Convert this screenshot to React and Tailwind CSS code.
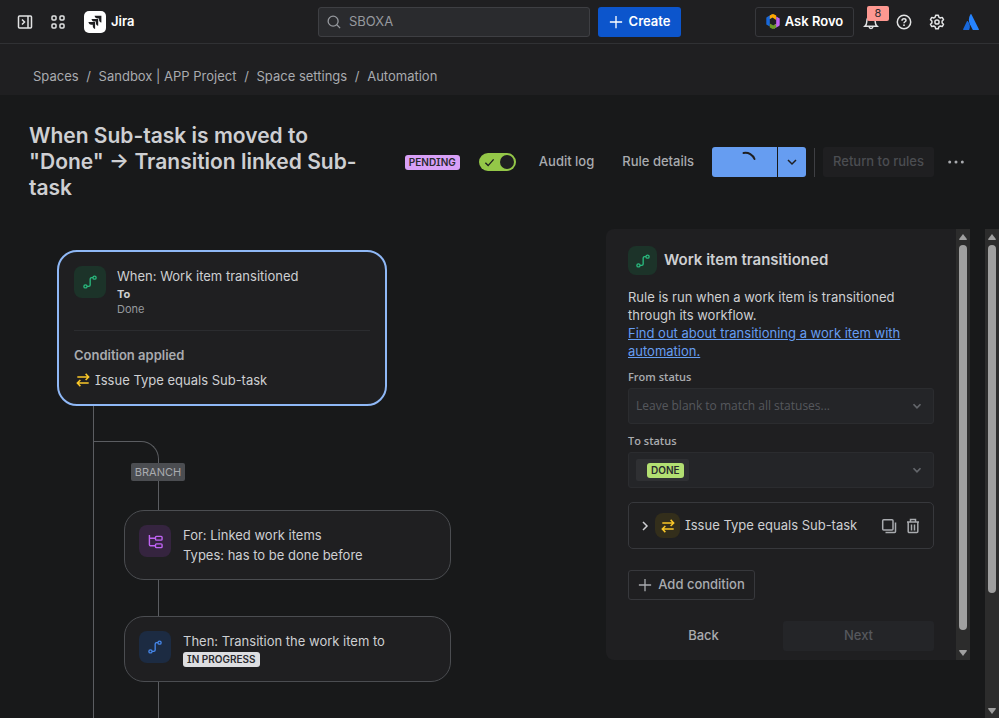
import React from 'react';
import clsx from 'clsx';

const CRUMBS = ['Spaces', 'Sandbox | APP Project', 'Space settings', 'Automation'];

// ── ICONS ──
function Icon({ size = 16, stroke = 1.5, className, children }) {
  return (
    <svg
      width={size}
      height={size}
      viewBox="0 0 16 16"
      fill="none"
      stroke="currentColor"
      strokeWidth={stroke}
      className={clsx('shrink-0', className)}
      aria-hidden="true"
    >
      {children}
    </svg>
  );
}

function TransitionIcon({ className }) {
  return (
    <Icon size={14} className={className}>
      <circle cx="2.8" cy="13" r="1.8" />
      <circle cx="13.2" cy="3" r="1.8" />
      <path d="M4.6 13H6.5C7.6 13 8.2 12.4 8.2 11.3V4.7C8.2 3.6 8.8 3 9.9 3H11.4" />
    </Icon>
  );
}

function BranchIcon() {
  return (
    <Icon size={15}>
      <path d="M1.5 1v10.5a1 1 0 0 0 1 1H8M1.5 4.5H8" />
      <rect x="8" y="2.5" width="7" height="4" rx="1" />
      <rect x="8" y="10.5" width="7" height="4" rx="1" />
    </Icon>
  );
}

function SwapIcon() {
  return (
    <Icon size={14} stroke={1.7}>
      <path d="M1.5 4.500h12.500M11 1l3.500 3.500L11 8M14.500 11.500H2M5 8l-3.500 3.500L5 15" />
    </Icon>
  );
}

function PlusIcon() {
  return (
    <Icon size={14}>
      <path d="M8 1v14M1 8h14" />
    </Icon>
  );
}

function ChevronDown({ size = 16, stroke, className }) {
  return (
    <Icon size={size} stroke={stroke} className={className}>
      <path d="M4 6l4 4 4-4" />
    </Icon>
  );
}

function IconTile({ size, tone, children }) {
  return (
    <div
      className={clsx(
        'flex shrink-0 items-center justify-center rounded-lg',
        size === 'lg' && 'h-8 w-8',
        size === 'md' && 'h-[29px] w-[29px]',
        size === 'sm' && 'h-[25px] w-[25px]',
        tone === 'green' && 'bg-[#1c3329] text-[#2abb7f]',
        tone === 'purple' && 'bg-[#35243f] text-[#bf63f3]',
        tone === 'blue' && 'bg-[#1c2b42] text-[#4688ec]',
        tone === 'yellow' && 'bg-[#332e1b] text-[#fbc828]'
      )}
    >
      {children}
    </div>
  );
}

function Lozenge({ tone, children }) {
  return (
    <span
      className={clsx(
        'inline-flex h-[15px] items-center rounded-[3px] px-1 text-[10px] font-semibold leading-none text-[#292a2e]',
        tone === 'purple' && 'bg-[#d8a0f7]',
        tone === 'green' && 'bg-[#b3df72]',
        tone === 'gray' && 'bg-[#dddee1]'
      )}
    >
      {children}
    </span>
  );
}

function ScrollBar({ thumb }) {
  return (
    <div className="flex w-[14px] shrink-0 flex-col items-center bg-[#2c2c2c] pt-[5px] pb-1" aria-hidden="true">
      <svg width="8" height="6" viewBox="0 0 8 6" className="shrink-0" fill="#9f9f9f">
        <path d="M4 0L8 5.2Q8 6 7 6H1Q0 6 0 5.2z" />
      </svg>
      <div className="mt-[5px] flex w-2 flex-1 flex-col">
        <div className={clsx('w-full rounded-full bg-[#9f9f9f]', thumb)} />
      </div>
      <svg width="8" height="6" viewBox="0 0 8 6" className="shrink-0" fill="#9f9f9f">
        <path d="M4 6L0 .8Q0 0 1 0h6q1 0 1 .8z" />
      </svg>
    </div>
  );
}

// ── TOP BAR ──
function TopBar() {
  return (
    <header className="flex h-11 shrink-0 items-center border-b border-[#303134] bg-[#1f1f21] text-[#e2e3e4]">
      <div className="flex flex-1 items-center">
        <button type="button" aria-label="Expand sidebar" className="ml-[17px]">
          <Icon>
            <rect x="1.5" y="2" width="13" height="12" rx="1" />
            <path d="M11 2v12M5 5.5L7.5 8 5 10.5" />
          </Icon>
        </button>
        <button type="button" aria-label="Switch apps" className="ml-[17px]">
          <Icon>
            <rect x="2" y="2" width="4" height="4" rx="1" />
            <rect x="10" y="2" width="4" height="4" rx="1" />
            <rect x="2" y="10" width="4" height="4" rx="1" />
            <rect x="10" y="10" width="4" height="4" rx="1" />
          </Icon>
        </button>
        <a href="#home" className="ml-[18px] flex items-center gap-[5px] text-[13px] font-semibold text-white">
          <svg width="22" height="22" viewBox="0 0 22 22" aria-hidden="true">
            <rect width="22" height="22" rx="5" fill="#fff" />
            <g fill="#1f1f21">
              <path d="M10.6 4.8H17.4V11.6C15.7 11.2 15.1 10.2 15.1 8.7V7.5H13.8C11.9 7.5 10.9 6.6 10.6 4.8z" />
              <path d="M7.5 8H14.2V14.8C12.5 14.4 11.9 13.3 11.9 11.9V10.6H10.6C8.8 10.6 7.8 9.7 7.5 8z" />
              <path d="M4.4 11.1H11.1V17.9C9.4 17.5 8.8 16.5 8.8 15V13.7H7.5C5.6 13.7 4.7 12.8 4.4 11.1z" />
            </g>
          </svg>
          Jira
        </a>
      </div>

      <div className="flex w-[363px] shrink-0 gap-2">
        <label className="flex h-[30px] flex-1 items-center gap-2 rounded-[3px] border border-[#3e3f43] bg-[#2a2b2e] px-2 text-[#96999e]">
          <Icon size={14}>
            <circle cx="7" cy="7" r="5.7" />
            <path d="M11.2 11.2L15 15" />
          </Icon>
          <input
            type="search"
            aria-label="Search"
            placeholder="SBOXA"
            className="w-full bg-transparent text-[13px] outline-none placeholder:text-[#96999e]"
          />
        </label>
        <button
          type="button"
          className="flex h-[30px] w-[83px] items-center justify-center gap-[6px] rounded-[3px] bg-[#0c55cc] text-[13px] font-semibold text-white"
        >
          <PlusIcon />
          Create
        </button>
      </div>

      <div className="flex flex-1 items-center justify-end">
        <button
          type="button"
          className="flex h-[30px] w-[99px] items-center justify-center gap-[5px] rounded-[3px] border border-[#37383c] text-[13px] font-semibold text-white"
        >
          <svg width="14" height="15" viewBox="0 0 14 15" aria-hidden="true">
            <path d="M6 .3L1 3Q.3 3.500 .3 4.300V10.600L3.800 12.500V5.200L6.300 3.700z" fill="#1868db" />
            <path d="M3.800 1.500L6.200 .2Q7 0 7.800 .3L10.200 1.600V6L6.500 3.600 3.800 5z" fill="#fca700" />
            <path d="M8 14.700L13 12Q13.700 11.500 13.700 10.700V4.400L10.200 2.500V9.800L7.700 11.300z" fill="#bf63f3" />
            <path d="M10.200 13.500L7.800 14.800Q7 15 6.200 14.700L3.800 13.400V9.500L7.500 11.400 10.200 10z" fill="#6a9a23" />
          </svg>
          Ask Rovo
        </button>
        <button type="button" aria-label="Notifications, 8 unread" className="relative ml-[9px]">
          <Icon>
            <path d="M2 12.200h12c-1.200-1-1.600-2-1.700-4C12.200 4.500 11 2 8 2S3.800 4.500 3.700 8.200c-.1 2-.5 3-1.700 4zM6 12.500c.2 1.500 1 2 2 2s1.800-.5 2-2" />
          </Icon>
          <span className="absolute -top-2 left-1 flex h-[15px] w-[22px] items-center justify-center rounded-[2px] bg-[#fd9891] text-[11px] leading-none text-[#292a2e]">
            8
          </span>
        </button>
        <button type="button" aria-label="Help" className="ml-[17px]">
          <Icon>
            <circle cx="8" cy="8" r="6.700" />
            <path d="M6 6.700C6 5.400 6.900 4.700 8 4.700s2 .7 2 1.700c0 1.300-2 1.400-2 2.800" />
            <circle cx="8" cy="11.200" r=".9" fill="currentColor" stroke="none" />
          </Icon>
        </button>
        <button type="button" aria-label="Settings" className="ml-[17px]">
          <Icon>
            <path d="M6.700 1.200h2.600l.5 1.900 1.500.9 1.900-.6 1.300 2.300-1.400 1.300v2l1.400 1.300-1.300 2.300-1.900-.6-1.500.9-.5 1.900H6.700l-.5-1.900-1.500-.9-1.900.6-1.300-2.300L2.900 9V7L1.500 5.700l1.300-2.300 1.900.6 1.500-.9z" strokeLinejoin="round" />
            <circle cx="8" cy="8" r="2.100" />
          </Icon>
        </button>
        <button type="button" aria-label="Account" className="mr-[19px] ml-[17px]">
          <svg width="18" height="18" viewBox="0 0 18 18" aria-hidden="true">
            <path d="M5.800 8.100C5.500 7.800 5.100 7.800 4.900 8.200L1.100 16.200Q.9 17 1.700 17H6.600Q7.100 17 7.300 16.500C8.500 14.100 7.900 10.500 5.800 8.100z" fill="#1868db" />
            <path d="M8.500 1.300C6.300 4.800 6.500 8.500 7.900 11.300L10.600 16.500Q10.900 17 11.400 17H16.400Q17.200 17 16.900 16.200L9.400 1.300Q8.900.7 8.500 1.300z" fill="#2684ff" />
          </svg>
        </button>
      </div>
    </header>
  );
}

function Breadcrumbs() {
  return (
    <nav aria-label="Breadcrumb" className="h-[51px] shrink-0 bg-[#1f1f21] pt-[22px] pl-[33px]">
      <ol className="flex text-[13px] leading-5 text-[#a9abaf]">
        {CRUMBS.map((crumb, i) => (
          <li key={crumb} className="flex">
            {i > 0 && <span className="w-5 text-center">/</span>}
            <a href="#crumb">{crumb}</a>
          </li>
        ))}
      </ol>
    </nav>
  );
}

// ── RULE TITLE + ACTIONS ──
function RuleHeader() {
  return (
    <div className="flex shrink-0 items-center pt-7 pr-[35px] pl-[29px] text-[13px] font-medium text-[#a9abaf]">
      <h1 className="w-[340px] shrink-0 text-[21px] font-semibold leading-[26px] text-[#cecfd2]">
        When Sub-task is moved to "Done" → Transition linked Sub-<wbr />task
      </h1>
      <div className="ml-auto flex shrink-0 items-center">
        <Lozenge tone="purple">PENDING</Lozenge>
        <label className="relative ml-[19px] flex h-[18px] w-[37px] cursor-pointer items-center justify-between rounded-full bg-[#94c748] pr-[2px] pl-[5px] text-[#1f1f21]">
          <input type="checkbox" defaultChecked aria-label="Rule enabled" className="absolute inset-0 opacity-0" />
          <Icon size={11}>
            <path d="M2 8.500l4 4 8-9" strokeWidth="2" />
          </Icon>
          <span className="h-[14px] w-[14px] rounded-full bg-[#1f1f21]" />
        </label>
        <button type="button" className="ml-[23px]">Audit log</button>
        <button type="button" className="ml-7">Rule details</button>
        <div className="ml-[18px] flex h-[30px] gap-px text-[#1f1f21]">
          <button type="button" aria-label="Saving" className="flex w-[65px] justify-center rounded-l-[3px] bg-[#669df1]">
            <svg width="22" height="22" viewBox="0 0 22 22" fill="none" className="mt-1" aria-hidden="true">
              <path d="M9.500 2C14.500 1 19 4 20.500 8" stroke="currentColor" strokeWidth="2" strokeLinecap="round" />
            </svg>
          </button>
          <button type="button" aria-label="More save options" className="flex w-7 items-center justify-center rounded-r-[3px] bg-[#669df1]">
            <ChevronDown />
          </button>
        </div>
        <div className="mx-2 h-[29px] w-px bg-[#3e3f43]" />
        <button type="button" disabled className="h-[30px] w-[111px] rounded-[3px] bg-[#1f1f21] text-[#4b4d51]">
          Return to rules
        </button>
        <button type="button" aria-label="More actions" className="ml-[14px]">
          <Icon>
            <g fill="currentColor" stroke="none">
              <circle cx="1.700" cy="8" r="1.500" />
              <circle cx="8" cy="8" r="1.500" />
              <circle cx="14.300" cy="8" r="1.500" />
            </g>
          </Icon>
        </button>
      </div>
    </div>
  );
}

// ── RULE FLOW ──
function RuleCard({ tone, icon, children }) {
  return (
    <div className="ml-[30px] flex gap-3 rounded-[20px] border border-[#4b4d51] bg-[#1f1f21] p-[14px]">
      <IconTile size="lg" tone={tone}>{icon}</IconTile>
      <div className="text-[13px] leading-5 text-[#cecfd2]">{children}</div>
    </div>
  );
}

function RuleFlow() {
  return (
    <section aria-label="Rule flow" className="flex min-h-0 flex-1 flex-col overflow-hidden pt-[21px] pl-[57px]">
      <div className="w-[330px] shrink-0 rounded-[20px] border-2 border-[#8fb8f6] bg-[#1f1f21] px-[15px] py-[14px]">
        <div className="flex gap-[11px]">
          <IconTile size="lg" tone="green"><TransitionIcon /></IconTile>
          <div className="text-[13px] leading-5 text-[#cecfd2]">
            <p>When: Work item transitioned</p>
            <p className="text-[11px] font-bold leading-4">To</p>
            <p className="text-[11px] leading-[14px] text-[#96999e]">Done</p>
          </div>
        </div>
        <hr className="mt-[14px] border-[#2b2c2f]" />
        <p className="mt-[14px] text-[13px] font-semibold leading-5 text-[#a9abaf]">Condition applied</p>
        <p className="mt-[5px] flex items-center gap-[5px] pl-[2px] text-[13px] leading-5 text-[#cecfd2]">
          <span className="text-[#fbc828]"><SwapIcon /></span>
          Issue Type equals Sub-task
        </p>
      </div>

      {/* main line stays on the left, branch hangs off it */}
      <div className="ml-9 flex w-[358px] flex-1 flex-col border-l border-[#5b5d61]">
        <div className="mt-[35px] h-[22px] w-[65px] shrink-0 rounded-tr-[18px] border-t border-r border-[#5b5d61]" />
        <span className="ml-[37px] flex h-[18px] w-[54px] shrink-0 items-center justify-center rounded-[2px] bg-[#4b4d51] text-[11px] text-[#a9abaf]">
          BRANCH
        </span>
        <div className="ml-16 h-[29px] w-px shrink-0 bg-[#5b5d61]" />
        <RuleCard tone="purple" icon={<BranchIcon />}>
          <p>For: Linked work items</p>
          <p>Types: has to be done before</p>
        </RuleCard>
        <div className="ml-16 h-9 w-px shrink-0 bg-[#5b5d61]" />
        <RuleCard tone="blue" icon={<TransitionIcon />}>
          <p>Then: Transition the work item to</p>
          <p className="flex h-4 items-center"><Lozenge tone="gray">IN PROGRESS</Lozenge></p>
        </RuleCard>
        <div className="ml-16 w-px flex-1 bg-[#5b5d61]" />
      </div>
    </section>
  );
}

// ── CONFIG PANEL ──
function ConfigPanel() {
  return (
    <aside className="flex w-[364px] shrink-0 self-start overflow-hidden rounded-l-lg bg-[#1f1f21] text-[13px] text-[#cecfd2]">
      <div className="flex min-w-0 flex-1 flex-col px-[22px] pt-[17px] pb-[9px]">
        <div className="flex items-center gap-[7px]">
          <IconTile size="md" tone="green"><TransitionIcon /></IconTile>
          <h2 className="text-[15px] font-semibold">Work item transitioned</h2>
        </div>
        <p className="mt-[13px] leading-[18px]">Rule is run when a work item is transitioned through its workflow.</p>
        <a href="#docs" className="leading-[18px] text-[#669df1] underline">
          Find out about transitioning a work item with automation.
        </a>

        <label htmlFor="from-status" className="mt-[9px] font-['Open_Sans',sans-serif] text-[11px] font-semibold leading-4 text-[#a9abaf]">
          From status
        </label>
        <div className="relative mt-[3px]">
          <select
            id="from-status"
            disabled
            className="block h-9 w-full appearance-none rounded-[3px] border border-[#2b2c2f] bg-[#242528] px-[7px] font-['Open_Sans',sans-serif] text-[12px] text-[#56585d]"
          >
            <option>Leave blank to match all statuses...</option>
          </select>
          <ChevronDown size={14} stroke={2} className="pointer-events-none absolute top-[11px] right-[10px] text-[#63666b]" />
        </div>

        <span id="to-status" className="mt-[9px] font-['Open_Sans',sans-serif] text-[11px] font-semibold leading-4 text-[#a9abaf]">
          To status
        </span>
        <button
          type="button"
          aria-haspopup="listbox"
          aria-labelledby="to-status"
          className="mt-[3px] flex h-9 items-center justify-between rounded-[3px] border border-[#2b2c2f] bg-[#242528] pr-[9px] pl-[7px]"
        >
          <span className="flex h-[22px] items-center rounded-[2px] bg-[#2f3033] pr-[5px] pl-[11px]">
            <Lozenge tone="green">DONE</Lozenge>
          </span>
          <ChevronDown size={14} stroke={2} className="text-[#63666b]" />
        </button>

        <div className="mt-[14px] flex h-[47px] items-center rounded-[5px] border border-[#37383c] pr-3 pl-2">
          <button type="button" aria-label="Expand condition" className="mr-[2px]">
            <Icon>
              <path d="M6 4l4 4-4 4" />
            </Icon>
          </button>
          <IconTile size="sm" tone="yellow"><SwapIcon /></IconTile>
          <span className="ml-[5px] flex-1">Issue Type equals Sub-task</span>
          <button type="button" aria-label="Duplicate" className="mr-2 text-[#a9abaf]">
            <Icon>
              <rect x="1.700" y="1.700" width="10.300" height="10.300" rx="1" />
              <path d="M14.500 4.500v9a1 1 0 0 1-1 1h-9" />
            </Icon>
          </button>
          <button type="button" aria-label="Delete" className="text-[#a9abaf]">
            <Icon>
              <path d="M2 4h12M5.500 4V1.500h5V4M3.200 4v9.500a1 1 0 0 0 1 1h7.600a1 1 0 0 0 1-1V4M6.500 6.500v6M9.500 6.500v6" />
            </Icon>
          </button>
        </div>

        <button
          type="button"
          className="mt-[21px] flex h-[30px] w-[127px] items-center justify-center gap-[6px] rounded-[3px] border border-[#37383c] font-medium text-[#a9abaf]"
        >
          <PlusIcon />
          Add condition
        </button>

        <div className="mt-[21px] grid h-[30px] grid-cols-2 gap-1 font-medium">
          <button type="button" className="text-[#a9abaf]">Back</button>
          <button type="button" disabled className="rounded-[3px] bg-[#242528] text-[#56585d]">Next</button>
        </div>
      </div>
      <ScrollBar thumb="h-[385px]" />
    </aside>
  );
}

export default function App() {
  return (
    <div className="flex h-screen flex-col overflow-hidden bg-[#18191a] font-['Inter',sans-serif] [font-feature-settings:'cv08']">
      <TopBar />
      <Breadcrumbs />
      <RuleHeader />
      <main className="mt-7 flex min-h-0 flex-1">
        <RuleFlow />
        <ConfigPanel />
        <div className="ml-[15px] flex">
          <ScrollBar thumb="h-[348px]" />
        </div>
      </main>
    </div>
  );
}
